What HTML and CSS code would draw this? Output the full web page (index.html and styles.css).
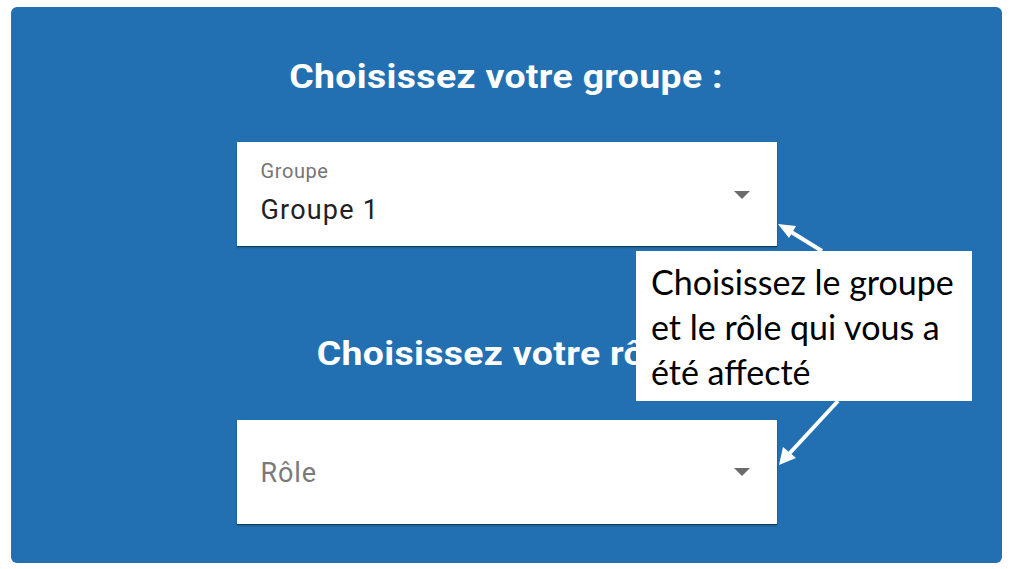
FILE: index.html
```html
<!DOCTYPE html>
<html lang="fr">
<head>
<meta charset="utf-8">
<title>Choix du groupe</title>
<link rel="stylesheet" href="styles.css">
</head>
<body>
<div class="panel">
  <h2 class="title">Choisissez votre groupe :</h2>
  <div class="select filled">
    <div class="field">
      <span class="label">Groupe</span>
      <span class="value">Groupe 1</span>
    </div>
    <span class="caret"></span>
  </div>
  <h2 class="title second">Choisissez votre rôle :</h2>
  <div class="select">
    <div class="field">
      <span class="placeholder">Rôle</span>
    </div>
    <span class="caret"></span>
  </div>
</div>
<svg class="arrows" width="1012" height="569" viewBox="0 0 1012 569">
  <line x1="822" y1="251" x2="788" y2="230" stroke="#fff" stroke-width="4"/>
  <polygon points="778,224 796,226 789,238" fill="#fff"/>
  <line x1="838" y1="401" x2="788" y2="455" stroke="#fff" stroke-width="4"/>
  <polygon points="779,465 783,447 796,458" fill="#fff"/>
</svg>
<div class="callout">Choisissez le groupe et le rôle qui vous a été affecté</div>
</body>
</html>
```
FILE: styles.css
```css
html, body {
  margin: 0;
  padding: 0;
  background: #ffffff;
}
body {
  width: 1012px;
  height: 569px;
  position: relative;
  overflow: hidden;
  font-family: Roboto, "Liberation Sans", sans-serif;
}
.panel {
  box-sizing: border-box;
  margin: 7px 0 0 11px;
  width: 991px;
  height: 556px;
  background: #2270b1;
  border-radius: 6px;
  display: flex;
  flex-direction: column;
  align-items: center;
  padding-top: 47px;
}
.title {
  margin: 0;
  color: #ffffff;
  font-weight: 700;
  font-size: 34px;
  line-height: 44px;
  height: 44px;
  letter-spacing: 0.3px;
  transform: scaleX(1.1);
}
.title.second {
  margin-top: 85px;
}
.select {
  box-sizing: border-box;
  margin-top: 44px;
  width: 540px;
  height: 104px;
  background: #ffffff;
  box-shadow: 0 1px 1px rgba(0,0,0,0.35), 0 2px 2px rgba(0,0,0,0.15);
  display: flex;
  align-items: center;
  padding: 0 27px 0 24px;
}
.title.second + .select {
  margin-top: 45px;
}
.field {
  flex: 1;
  display: flex;
  flex-direction: column;
}
.label {
  font-size: 20px;
  line-height: 24px;
  color: #757575;
  margin-top: -3px;
  letter-spacing: 0.6px;
}
.value {
  font-size: 27px;
  line-height: 32px;
  color: #212121;
  margin-top: 11px;
  letter-spacing: 1.2px;
}
.placeholder {
  font-size: 27px;
  line-height: 32px;
  color: #7a7a7a;
  letter-spacing: 0.9px;
  margin-top: 2px;
}
.caret {
  width: 0;
  height: 0;
  border-left: 8px solid transparent;
  border-right: 8px solid transparent;
  border-top: 8px solid #6b6b6b;
}
.filled .caret {
  margin-top: 2px;
}
.arrows {
  position: absolute;
  left: 0;
  top: 0;
}
.callout {
  position: absolute;
  left: 636px;
  top: 251px;
  box-sizing: border-box;
  width: 336px;
  height: 150px;
  background: #ffffff;
  padding: 8px 8px 0 15px;
  font-family: Lato, "Open Sans", sans-serif;
  font-size: 34px;
  line-height: 45px;
  color: #000000;
}
```
